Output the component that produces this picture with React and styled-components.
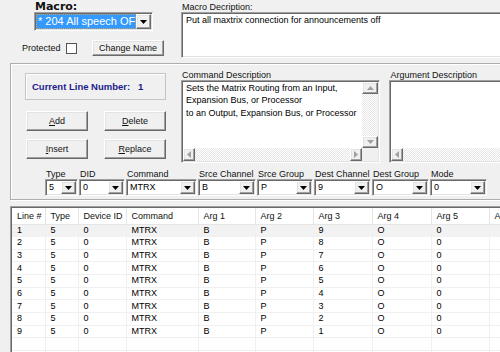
import React from 'react';
import styled, { createGlobalStyle, css } from 'styled-components';

const GlobalStyle = createGlobalStyle`
  html, body { margin: 0; padding: 0; background: #f0f0f0; overflow: hidden; }
  body { font-family: "Liberation Sans", Arial, sans-serif; font-size: 9px; color: #000; }
  *, *::before, *::after { box-sizing: border-box; }
`;

const raised = css`
  background: #f0f0f0;
  border: 1px solid;
  border-color: #ffffff #696969 #696969 #ffffff;
  box-shadow: inset -1px -1px #a0a0a0, inset 1px 1px #e3e3e3;
`;

const sunken = css`
  background: #ffffff;
  border: 1px solid;
  border-color: #a0a0a0 #ffffff #ffffff #a0a0a0;
  box-shadow: inset 1px 1px #696969, inset -1px -1px #e3e3e3;
`;

const Window = styled.div`
  width: 500px;
  height: 352px;
  overflow: hidden;
  background: #f0f0f0;
  display: flex;
  flex-direction: column;
`;

/* ---------- top section ---------- */
const TopSection = styled.div`
  display: flex;
  height: 63px;
  flex-shrink: 0;
  padding-left: 22px;
  gap: 17px;
`;

const MacroCol = styled.div`
  width: 142px;
  flex-shrink: 0;
  display: flex;
  flex-direction: column;
`;

const BigLabel = styled.div`
  margin-left: 13px;
  height: 12px;
  padding-top: 1px;
  font: bold 11px/12px "DejaVu Sans", sans-serif;
  color: #111;
`;

const MacroCombo = styled.div`
  ${sunken};
  margin-left: 12px;
  width: 119px;
  height: 19px;
  padding: 1px 1px 1px 1px;
  display: flex;
`;

const Selection = styled.div`
  flex: 1;
  background: #3399ff;
  color: #fff;
  font-size: 11px;
  line-height: 15px;
  padding-left: 2px;
  white-space: nowrap;
  overflow: hidden;
  outline: 1px dotted #c8a060;
  outline-offset: -1px;
`;

const DropBtn = styled.div`
  ${raised};
  width: ${p => p.$w || 15}px;
  flex-shrink: 0;
  display: flex;
  align-items: center;
  justify-content: center;
`;

const ProtectRow = styled.div`
  margin-top: 9px;
  height: 16px;
  display: flex;
  align-items: center;
`;

const ProtectLabel = styled.span`
  width: 44px;
  color: #111;
`;

const CheckBox = styled.div`
  width: 11px;
  height: 11px;
  background: #fff;
  border: 1px solid #555;
`;

const Button = styled.div`
  ${raised};
  width: ${p => p.$w}px;
  height: ${p => p.$h || 20}px;
  margin-left: ${p => p.$ml || 0}px;
  display: flex;
  align-items: center;
  justify-content: center;
  color: #111;
  white-space: nowrap;
`;

const DescCol = styled.div`
  display: flex;
  flex-direction: column;
`;

const SmallLabel = styled.div`
  height: ${p => p.$h || 12}px;
  line-height: ${p => p.$lh || 12}px;
  padding-top: ${p => p.$pt || 0}px;
  padding-left: 1px;
  white-space: nowrap;
  color: #111;
`;

const MacroText = styled.div`
  ${sunken};
  width: 330px;
  height: 46px;
  padding: 1px 4px;
  line-height: 12px;
`;

/* ---------- group box ---------- */
const GroupBox = styled.div`
  margin-left: 10px;
  width: 530px;
  flex-shrink: 0;
  border: 1px solid #adadad;
  box-shadow: inset 1px 1px #fff, 1px 1px #fff;
  padding: 6px 0 3px 0;
  display: flex;
  flex-direction: column;
`;

const EditRow = styled.div`
  display: flex;
  align-items: flex-start;
  padding-left: 14px;
`;

const LeftCol = styled.div`
  width: 141px;
  margin-top: 3px;
  display: flex;
  flex-direction: column;
  gap: 11px;
`;

const LineBox = styled.div`
  height: 27px;
  border: 1px solid #c4c4c4;
  box-shadow: inset 1px 1px #fff;
  display: flex;
  align-items: center;
  padding-left: 6px;
  font-weight: bold;
  font-size: 9.5px;
  color: #1c1c8a;
  white-space: pre;
`;

const ButtonGrid = styled.div`
  display: grid;
  grid-template-columns: 62px 62px;
  column-gap: 16px;
  row-gap: 8px;
  padding-left: 1px;
`;

const Pane = styled.div`
  margin-left: ${p => p.$ml}px;
  width: ${p => p.$w}px;
  display: flex;
  flex-direction: column;
`;

const ScrollText = styled.div`
  ${sunken};
  height: 83px;
  padding: 1px;
  display: grid;
  grid-template-columns: 1fr ${p => (p.$noV ? '0px' : '16px')};
  grid-template-rows: 1fr 13px;
`;

const TextContent = styled.div`
  padding: 0 2px 0 3px;
  line-height: 12.3px;
  white-space: nowrap;
  overflow: hidden;
`;

const Track = styled.div`
  display: flex;
  flex-direction: ${p => (p.$vertical ? 'column' : 'row')};
  justify-content: space-between;
  background-color: #f4f4f4;
  background-image: conic-gradient(#ffffff 25%, #e6e6e6 0 50%, #ffffff 0 75%, #e6e6e6 0);
  background-size: 2px 2px;
`;

const ScrollBtn = styled.div`
  ${raised};
  width: ${p => (p.$vertical ? '100%' : '12px')};
  height: ${p => (p.$vertical ? '12px' : '100%')};
  display: flex;
  align-items: center;
  justify-content: center;
`;

const Corner = styled.div`
  background: #f0f0f0;
`;

const FieldRow = styled.div`
  display: flex;
  gap: 1px;
  padding-left: 34px;
  margin-top: 6px;
`;

const Field = styled.div`
  width: ${p => p.$w}px;
  display: flex;
  flex-direction: column;
`;

const FieldCombo = styled.div`
  ${sunken};
  height: 17px;
  padding: 1px 1px 1px 1px;
  display: flex;
`;

const FieldValue = styled.div`
  flex: 1;
  line-height: 13px;
  padding-left: 2px;
  overflow: hidden;
  white-space: nowrap;
`;

/* ---------- grid ---------- */
const GridWrap = styled.div`
  margin: 6px 0 0 10px;
  flex: 1;
  background: #fff;
  overflow: hidden;
  border-top: 1px solid #a0a0a0;
  border-left: 1px solid #a0a0a0;
  box-shadow: inset 1px 1px #696969;
  padding: 1px 0 0 1px;
`;

const Table = styled.table`
  border-collapse: collapse;
  table-layout: fixed;
  width: 575px;
`;

const Col = styled.col`
  width: ${p => p.$w}px;
`;

const Th = styled.th`
  height: 16px;
  padding: 0 0 0 5px;
  text-align: left;
  font-weight: normal;
  line-height: 14px;
  color: #111;
  background: #fff;
  border-right: 1px solid #e5e5e5;
  border-bottom: 1px solid #e5e5e5;
  white-space: nowrap;
  overflow: hidden;
`;

const Tr = styled.tr`
  background: ${p => (p.$current ? '#f2f2f2' : '#ffffff')};
`;

const Td = styled.td`
  height: 12.67px;
  padding: 0 0 0 5px;
  line-height: 11px;
  border-right: 1px solid #f0f0f0;
  border-bottom: 1px solid #f0f0f0;
  white-space: nowrap;
  overflow: hidden;
`;

const Arrow = ({ dir = 'down', color = '#000' }) => {
  const vertical = dir === 'up' || dir === 'down';
  const pts = {
    down: '0,0 7,0 3.5,4',
    up: '0,4 7,4 3.5,0',
    left: '4,0 4,7 0,3.5',
    right: '0,0 0,7 4,3.5',
  }[dir];
  return (
    <svg width={vertical ? 7 : 4} height={vertical ? 4 : 7} viewBox={vertical ? '0 0 7 4' : '0 0 4 7'}>
      <polygon points={pts} fill={color} />
    </svg>
  );
};

const fields = [
  { label: 'Type', w: 33, value: '5' },
  { label: 'DID', w: 46, value: '0' },
  { label: 'Command', w: 71, value: 'MTRX' },
  { label: 'Srce Channel', w: 58, value: 'B' },
  { label: 'Srce Group', w: 56, value: 'P' },
  { label: 'Dest Channel', w: 57, value: '9' },
  { label: 'Dest Group', w: 57, value: 'O' },
  { label: 'Mode', w: 57, value: '0' },
];

const columns = [
  { h: 'Line #', w: 33 },
  { h: 'Type', w: 33 },
  { h: 'Device ID', w: 48 },
  { h: 'Command', w: 72 },
  { h: 'Arg 1', w: 57 },
  { h: 'Arg 2', w: 58 },
  { h: 'Arg 3', w: 59 },
  { h: 'Arg 4', w: 59 },
  { h: 'Arg 5', w: 58 },
  { h: 'Arg 6', w: 98 },
];

const rows = Array.from({ length: 9 }, (_, i) => [
  String(i + 1), '5', '0', 'MTRX', 'B', 'P', String(9 - i), 'O', '0', '',
]);
const emptyRows = [0, 1];

export default function App() {
  return (
    <>
      <GlobalStyle />
      <Window>
        <TopSection>
          <MacroCol>
            <BigLabel>Macro:</BigLabel>
            <MacroCombo>
              <Selection>* 204 All speech OFF</Selection>
              <DropBtn><Arrow dir="down" /></DropBtn>
            </MacroCombo>
            <ProtectRow>
              <ProtectLabel>Protected</ProtectLabel>
              <CheckBox />
              <Button $w={72} $h={16} $ml={15}>Change Name</Button>
            </ProtectRow>
          </MacroCol>
          <DescCol>
            <SmallLabel $pt={1}>Macro Decription:</SmallLabel>
            <MacroText>Put all maxtrix connection for announcements off</MacroText>
          </DescCol>
        </TopSection>

        <GroupBox>
          <EditRow>
            <LeftCol>
              <LineBox>{'Current Line Number:   1'}</LineBox>
              <ButtonGrid>
                <Button $w={62}><span><u>A</u>dd</span></Button>
                <Button $w={62}><span><u>D</u>elete</span></Button>
                <Button $w={62}><span><u>I</u>nsert</span></Button>
                <Button $w={62}><span><u>R</u>eplace</span></Button>
              </ButtonGrid>
            </LeftCol>
            <Pane $ml={15} $w={200}>
              <SmallLabel $h={10} $lh={10}>Command Description</SmallLabel>
              <ScrollText>
                <TextContent>
                  Sets the Matrix Routing from an Input,<br />
                  Expansion Bus, or Processor<br />
                  to an Output, Expansion Bus, or Processor
                </TextContent>
                <Track $vertical>
                  <ScrollBtn $vertical><Arrow dir="up" color="#a0a0a0" /></ScrollBtn>
                  <ScrollBtn $vertical><Arrow dir="down" color="#a0a0a0" /></ScrollBtn>
                </Track>
                <Track>
                  <ScrollBtn><Arrow dir="left" color="#a0a0a0" /></ScrollBtn>
                  <ScrollBtn><Arrow dir="right" color="#a0a0a0" /></ScrollBtn>
                </Track>
                <Corner />
              </ScrollText>
            </Pane>
            <Pane $ml={9} $w={150}>
              <SmallLabel $h={10} $lh={10}>Argument Description</SmallLabel>
              <ScrollText $noV>
                <TextContent />
                <div />
                <Track>
                  <ScrollBtn><Arrow dir="left" color="#a0a0a0" /></ScrollBtn>
                </Track>
                <div />
              </ScrollText>
            </Pane>
          </EditRow>
          <FieldRow>
            {fields.map(f => (
              <Field key={f.label} $w={f.w}>
                <SmallLabel $h={10} $lh={10}>{f.label}</SmallLabel>
                <FieldCombo>
                  <FieldValue>{f.value}</FieldValue>
                  <DropBtn><Arrow dir="down" /></DropBtn>
                </FieldCombo>
              </Field>
            ))}
          </FieldRow>
        </GroupBox>

        <GridWrap>
          <Table>
            <colgroup>
              {columns.map(c => <Col key={c.h} $w={c.w} />)}
            </colgroup>
            <thead>
              <tr>
                {columns.map(c => <Th key={c.h}>{c.h}</Th>)}
              </tr>
            </thead>
            <tbody>
              {rows.map((r, i) => (
                <Tr key={i} $current={i === 0}>
                  {r.map((v, j) => <Td key={j}>{v}</Td>)}
                </Tr>
              ))}
              {emptyRows.map(k => (
                <Tr key={'e' + k}>
                  {columns.map(c => <Td key={c.h} />)}
                </Tr>
              ))}
            </tbody>
          </Table>
        </GridWrap>
      </Window>
    </>
  );
}
